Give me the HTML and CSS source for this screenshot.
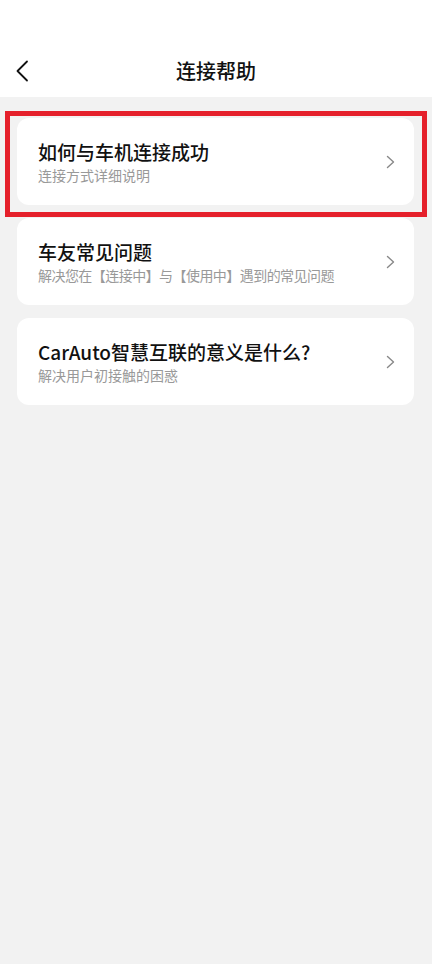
FILE: index.html
```html
<!DOCTYPE html>
<html lang="zh-CN">
<head>
<meta charset="utf-8">
<title>连接帮助</title>
<link rel="stylesheet" href="styles.css">
</head>
<body>
<div class="page">
  <header class="header">
    <div class="navbar">
      <span class="back">
        <svg width="14" height="22" viewBox="0 0 14 22"><path d="M12 1.5 L2.5 11 L12 20.5" fill="none" stroke="#111" stroke-width="1.8" stroke-linecap="round" stroke-linejoin="round"/></svg>
      </span>
      <h1 class="title">连接帮助</h1>
    </div>
  </header>
  <main class="list">
    <div class="card">
      <div class="text">
        <div class="card-title">如何与车机连接成功</div>
        <div class="card-sub">连接方式详细说明</div>
      </div>
      <svg class="chev" width="9" height="14" viewBox="0 0 9 14"><path d="M1.5 1.5 L7.5 7 L1.5 12.5" fill="none" stroke="#888" stroke-width="1.4" stroke-linecap="round" stroke-linejoin="round"/></svg>
    </div>
    <div class="card">
      <div class="text">
        <div class="card-title">车友常见问题</div>
        <div class="card-sub tight">解决您在【连接中】与【使用中】遇到的常见问题</div>
      </div>
      <svg class="chev" width="9" height="14" viewBox="0 0 9 14"><path d="M1.5 1.5 L7.5 7 L1.5 12.5" fill="none" stroke="#888" stroke-width="1.4" stroke-linecap="round" stroke-linejoin="round"/></svg>
    </div>
    <div class="card">
      <div class="text">
        <div class="card-title">CarAuto智慧互联的意义是什么?</div>
        <div class="card-sub">解决用户初接触的困惑</div>
      </div>
      <svg class="chev" width="9" height="14" viewBox="0 0 9 14"><path d="M1.5 1.5 L7.5 7 L1.5 12.5" fill="none" stroke="#888" stroke-width="1.4" stroke-linecap="round" stroke-linejoin="round"/></svg>
    </div>
  </main>
  <div class="highlight"></div>
</div>
</body>
</html>
```

FILE: styles.css
```css
* { box-sizing: border-box; }
html, body {
  margin: 0;
  padding: 0;
  background: #f2f2f2;
  font-family: "Noto Sans CJK SC", "Noto Sans", sans-serif;
}
.page {
  position: relative;
  width: 432px;
  min-height: 964px;
  background: #f2f2f2;
}
.header {
  background: #fff;
  height: 97px;
  padding-top: 46px;
}
.navbar {
  position: relative;
  height: 50px;
  display: flex;
  align-items: center;
  justify-content: center;
}
.back {
  position: absolute;
  left: 15px;
  top: 14px;
  display: flex;
}
.title {
  margin: 0;
  font-size: 20px;
  font-weight: 500;
  color: #111;
  line-height: 1;
}
.list {
  padding: 21px 18px 0 17px;
  display: flex;
  flex-direction: column;
  gap: 13px;
}
.card {
  height: 87px;
  background: #fff;
  border-radius: 12px;
  display: flex;
  align-items: center;
  justify-content: space-between;
  padding: 0 19px 0 21px;
}
.text {
  display: flex;
  flex-direction: column;
  padding-top: 2px;
}
.card-title {
  font-size: 19px;
  font-weight: 500;
  color: #111;
  line-height: 24px;
}
.card-sub {
  font-size: 14px;
  color: #999;
  line-height: 20px;
  margin-top: 1px;
}
.tight { letter-spacing: -0.55px; }
.chev { flex: none; }
.highlight {
  position: absolute;
  left: 5px;
  top: 111px;
  width: 422px;
  height: 106px;
  border: 5px solid #e5202b;
}
```
